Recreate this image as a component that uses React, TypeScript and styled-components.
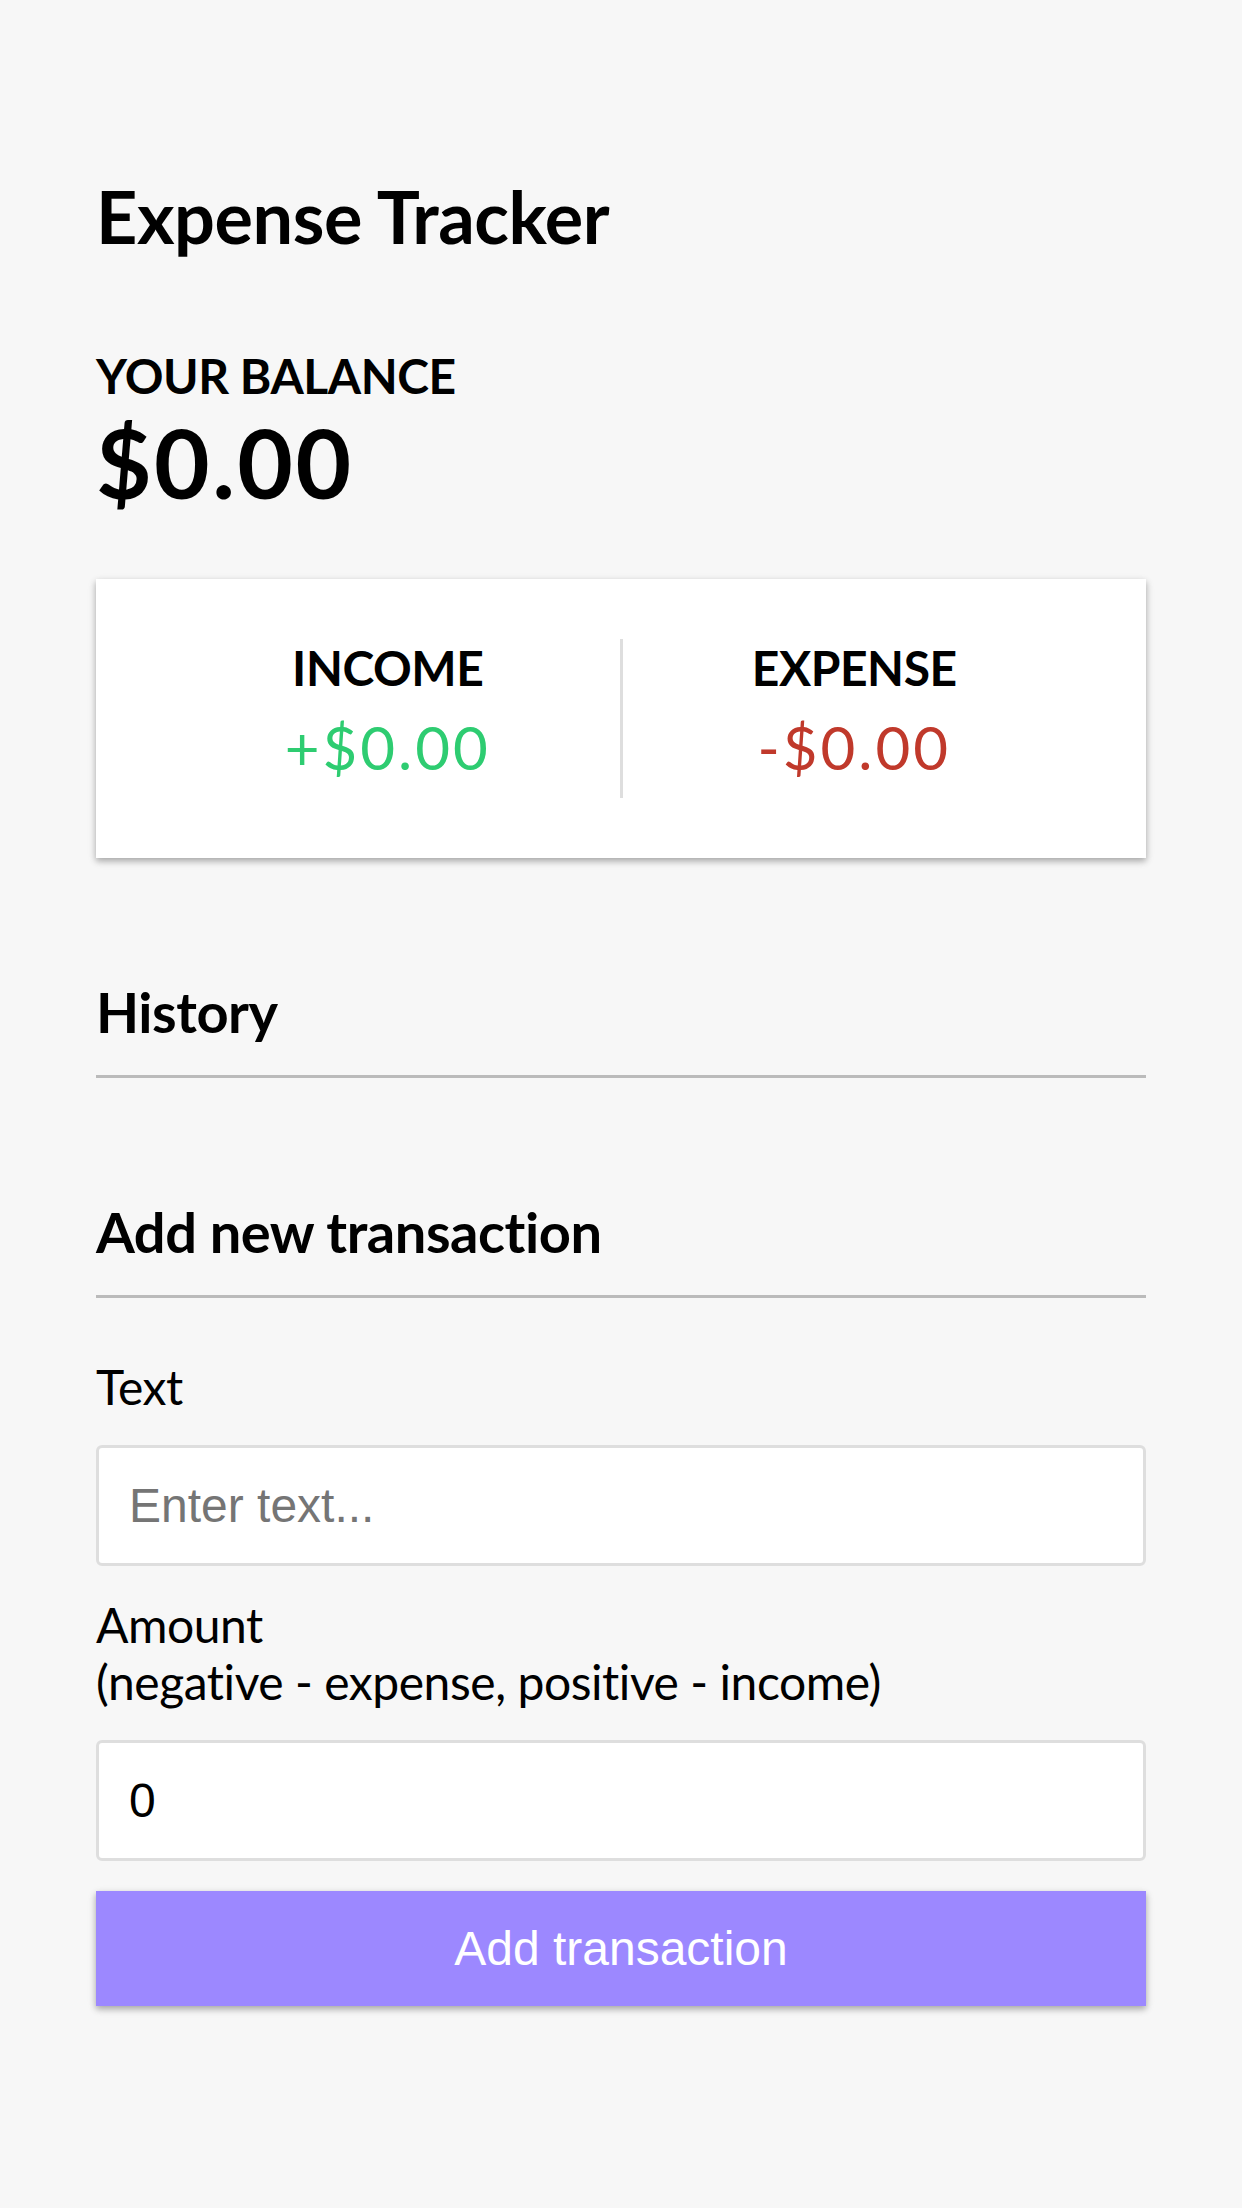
import React from "react";
import styled, {createGlobalStyle} from "styled-components";

const boxShadow = "0 3px 9px rgba(0, 0, 0, 0.12), 0 3px 6px rgba(0, 0, 0, 0.24)";

const GlobalStyle = createGlobalStyle`
  * {
    box-sizing: border-box;
  }

  body {
    background-color: #f7f7f7;
    display: flex;
    flex-direction: column;
    align-items: center;
    justify-content: center;
    min-height: 100vh;
    margin: 0;
    font-family: Lato, "Noto Sans", sans-serif;
    font-variant-ligatures: none;
  }
`;

const Container = styled.div`
  margin: 60px auto 90px;
  width: 1050px;
`;

const Title = styled.h2`
  font-size: 72px;
  letter-spacing: -0.45px;
  margin: 0 0 88px;
`;

const Caption = styled.h4`
  font-size: 48px;
  letter-spacing: -0.45px;
  margin: 0;
  text-transform: uppercase;
`;

const Balance = styled.h1`
  font-size: 96px;
  letter-spacing: 2.4px;
  margin: 0;
`;

const IncomeExpense = styled.div`
  background-color: #fff;
  box-shadow: ${boxShadow};
  padding: 60px;
  display: flex;
  justify-content: space-between;
  margin: 60px 0;

  & > div {
    flex: 1;
    text-align: center;
  }

  & > div:first-of-type {
    border-right: 3px solid #dedede;
  }
`;

const Money = styled.p<{ $kind: "plus" | "minus" }>`
  font-size: 60px;
  letter-spacing: 3px;
  margin: 15px 0;
  color: ${p => (p.$kind === "plus" ? "#2ecc71" : "#c0392b")};
`;

const SectionTitle = styled.h3`
  font-size: 56px;
  letter-spacing: -0.45px;
  border-bottom: 3px solid #bbb;
  padding-bottom: 30px;
  margin: 120px 0 30px;
`;

const List = styled.ul`
  list-style-type: none;
  padding: 0;
  margin: 48px 0 120px;
`;

const FormControl = styled.div``;

const Label = styled.label`
  display: inline-block;
  font-size: 48px;
  letter-spacing: -0.45px;
  margin: 30px 0;
`;

const Input = styled.input`
  border: 3px solid #dedede;
  border-radius: 6px;
  display: block;
  font-family: "Liberation Sans", Arial, sans-serif;
  font-size: 48px;
  padding: 30px;
  width: 100%;
  background: #fff;

  &::placeholder {
    color: #757575;
  }
`;

const Button = styled.button`
  cursor: pointer;
  background-color: #9c88ff;
  box-shadow: ${boxShadow};
  color: #fff;
  border: 0;
  display: block;
  font-family: "Liberation Sans", Arial, sans-serif;
  font-size: 48px;
  margin: 30px 0 0;
  padding: 30px;
  width: 100%;
`;

export default function App() {
  return <>
    <GlobalStyle />
    <Container>
      <Title>Expense Tracker</Title>
      <Caption>Your Balance</Caption>
      <Balance>$0.00</Balance>
      <IncomeExpense>
        <div>
          <Caption>Income</Caption>
          <Money $kind="plus">+$0.00</Money>
        </div>
        <div>
          <Caption>Expense</Caption>
          <Money $kind="minus">-$0.00</Money>
        </div>
      </IncomeExpense>
      <SectionTitle>History</SectionTitle>
      <List />
      <SectionTitle>Add new transaction</SectionTitle>
      <form onSubmit={e => e.preventDefault()}>
        <FormControl>
          <Label htmlFor="text">Text</Label>
          <Input type="text" id="text" placeholder="Enter text..." />
        </FormControl>
        <FormControl>
          <Label htmlFor="amount">Amount <br />(negative - expense, positive - income)</Label>
          <Input type="number" id="amount" defaultValue={0} placeholder="Enter amount..." />
        </FormControl>
        <Button>Add transaction</Button>
      </form>
    </Container>
  </>;
}
